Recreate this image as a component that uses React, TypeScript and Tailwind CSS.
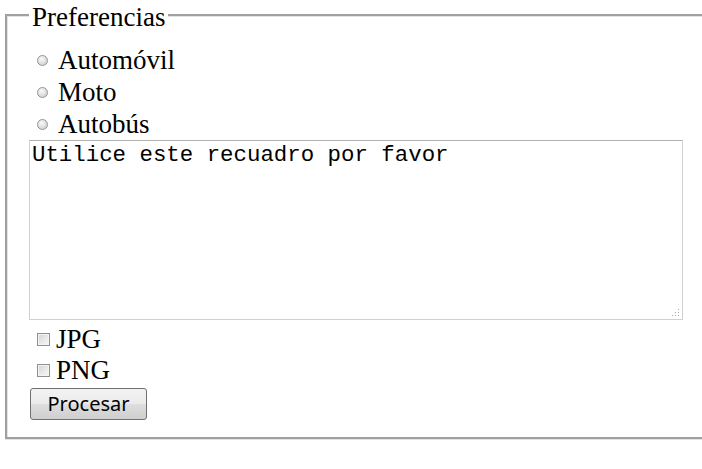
import React from 'react';

const serif = "font-['Liberation_Serif','Times_New_Roman',serif]";

const Radio = ({ label, name }: { label: string; name: string }) => (
  <label className={`flex items-center h-[32px] text-[27px] leading-[31px] text-black ${serif}`}>
    <input
      type="radio"
      name={name}
      className="appearance-none ml-[8px] mr-[10px] w-[11px] h-[11px] rounded-full border border-[#959595] bg-[radial-gradient(circle_at_40%_35%,#fafafa_0%,#dedede_55%,#c2c2c2_100%)]"
    />
    {label}
  </label>
);

const Check = ({ label }: { label: string }) => (
  <label className={`flex items-center h-[31px] text-[27px] leading-[31px] text-black ${serif}`}>
    <input
      type="checkbox"
      className="appearance-none ml-[8px] mr-[6px] w-[13px] h-[13px] border border-[#8f8f8f] bg-[linear-gradient(135deg,#d2d2d2_0%,#ebebeb_60%,#f6f6f6_100%)] shadow-[inset_0_0_0_1px_#f4f4f4]"
    />
    {label}
  </label>
);

export default function App() {
  return (
    <div className="w-[702px] h-[469px] overflow-hidden bg-white">
      <fieldset className="ml-[5px] w-[740px] border-2 border-r-0 border-[#a0a0a0] shadow-[inset_1px_1px_0_#e3e3e3,0_1px_0_#e3e3e3] pl-[22px] pb-[17px]">
        <legend className={`ml-0 px-[3px] pt-[4px] bg-white text-[27px] leading-[26px] text-black ${serif}`}>
          Preferencias
        </legend>

        <div className="pt-[14px]">
          <Radio name="vehiculo" label="Automóvil" />
          <Radio name="vehiculo" label="Moto" />
          <Radio name="vehiculo" label="Autobús" />
        </div>

        <div className="relative w-[654px] h-[180px]">
          <textarea
            defaultValue="Utilice este recuadro por favor"
            className="block w-full h-full resize-none border border-[#d0d0d0] border-t-[#b0b0b0] px-[2px] py-[2px] text-[22.4px] leading-[25px] text-black font-['Liberation_Mono','Courier_New',monospace] outline-none"
          />
          <svg className="absolute right-[3px] bottom-[3px]" width="8" height="8" viewBox="0 0 8 8">
            <rect x="6" y="0" width="1" height="1" fill="#a8a8a8" />
            <rect x="3" y="3" width="1" height="1" fill="#a8a8a8" />
            <rect x="6" y="3" width="1" height="1" fill="#a8a8a8" />
            <rect x="0" y="6" width="1" height="1" fill="#a8a8a8" />
            <rect x="3" y="6" width="1" height="1" fill="#a8a8a8" />
            <rect x="6" y="6" width="1" height="1" fill="#a8a8a8" />
          </svg>
        </div>

        <div className="mt-[4px]">
          <Check label="JPG" />
          <Check label="PNG" />
        </div>

        <button className="mt-[2px] ml-[1px] w-[117px] h-[32px] rounded-[3px] border border-[#707070] bg-[linear-gradient(#f2f2f2_0%,#ebebeb_48%,#dddddd_52%,#cfcfcf_100%)] text-[20px] leading-none text-black font-['Noto_Sans','Open_Sans',sans-serif]">
          Procesar
        </button>
      </fieldset>
    </div>
  );
}
